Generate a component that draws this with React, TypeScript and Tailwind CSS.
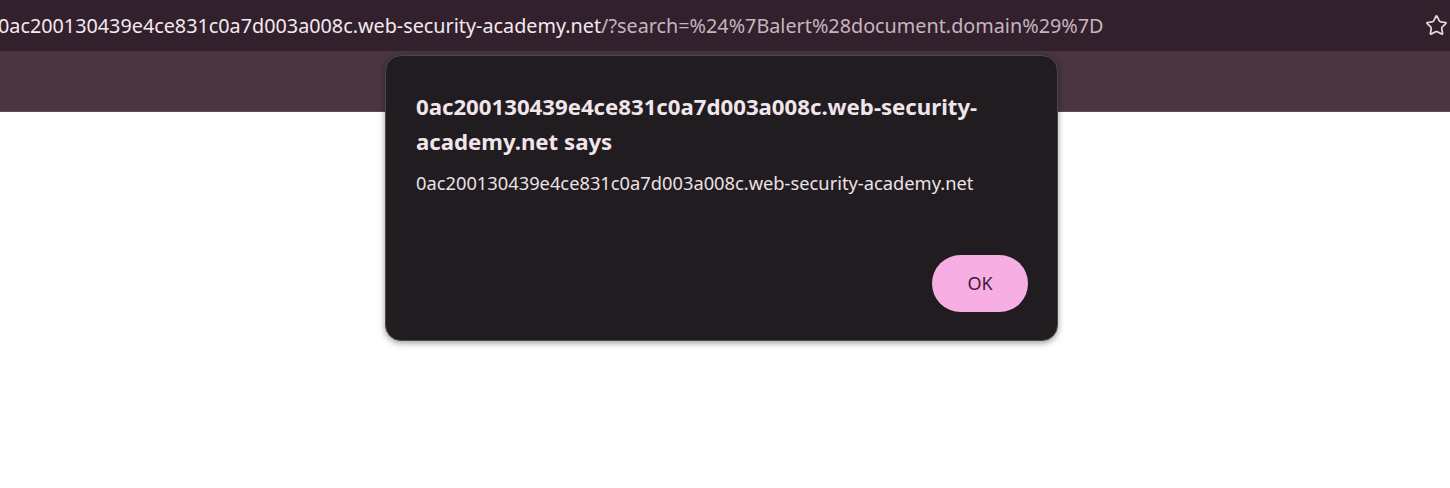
import React from 'react';
import { Star } from 'lucide-react';

const HOST = '0ac200130439e4ce831c0a7d003a008c.web-security-academy.net';

export default function App() {
  return (
    <div className="w-[1450px] h-[488px] bg-white overflow-hidden relative" style={{ fontFamily: '"Noto Sans", "Open Sans", sans-serif' }}>
      {/* Address bar */}
      <div className="h-[51px] bg-[#33202d] flex items-center pr-[2px]">
        <div className="flex-1 min-w-0 whitespace-nowrap text-[19.8px] leading-none -ml-[2px]">
          <span className="text-[#f3e9ef]">{HOST}</span>
          <span className="text-[#c6b5c0]">/?search=%24%7Balert%28document.domain%29%7D</span>
        </div>
        <Star className="w-[23px] h-[23px] text-[#e5d7df]" strokeWidth={1.8} />
      </div>
      {/* Toolbar strip */}
      <div className="h-[61px] bg-[#4a3541] border-b border-[#5d4a55]" />

      {/* Alert dialog */}
      <div className="absolute left-[385px] top-[55px] w-[673px] h-[286px] bg-[#211c20] rounded-[16px] border border-[#4d484c] shadow-[0_2px_6px_rgba(0,0,0,0.4)] px-[30px] pt-[33px] flex flex-col">
        <h1 className="text-[22.2px] font-bold leading-[35px] text-[#f1e5ec]">
          0ac200130439e4ce831c0a7d003a008c.web-security-
          <br />
          academy.net says
        </h1>
        <p className="mt-[11px] text-[18.3px] leading-[26px] text-[#ece1e7]">{HOST}</p>
        <div className="flex-1" />
        <div className="flex justify-end pb-[28px] -mr-[1px]">
          <button className="w-[96px] h-[57px] rounded-full bg-[#f7aee2] text-[#3b1a3a] text-[18px]">OK</button>
        </div>
      </div>
    </div>
  );
}
